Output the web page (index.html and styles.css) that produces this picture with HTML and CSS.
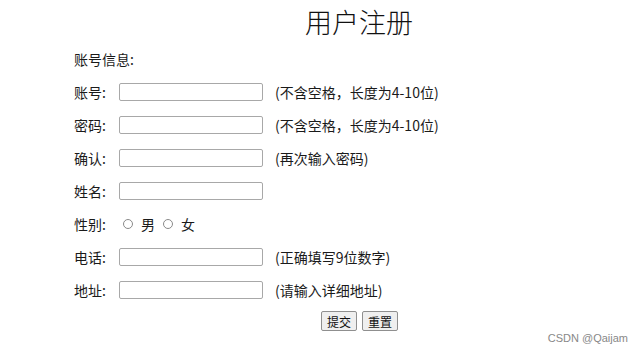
FILE: index.html
```html
<!DOCTYPE html>
<html lang="zh-CN">

<head>
    <meta charset="UTF-8">
    <meta name="viewport" content="width=device-width, initial-scale=1.0">
    <title>用户注册</title>
    <link rel="stylesheet" href="styles.css">
</head>

<body>

    <div class="page">
        <h1 class="title">用户注册</h1>
        <form class="reg">
            <div class="row info">账号信息:</div>
            <div class="row">
                <label class="lab">账号:</label>
                <input class="txt" type="text">
                <span class="tip">(不含空格，长度为4-10位)</span>
            </div>
            <div class="row">
                <label class="lab">密码:</label>
                <input class="txt" type="password">
                <span class="tip">(不含空格，长度为4-10位)</span>
            </div>
            <div class="row">
                <label class="lab">确认:</label>
                <input class="txt" type="password">
                <span class="tip">(再次输入密码)</span>
            </div>
            <div class="row">
                <label class="lab">姓名:</label>
                <input class="txt" type="text">
            </div>
            <div class="row">
                <label class="lab">性别:</label>
                <span class="sex">
                    <span class="radio"></span>男
                    <span class="radio"></span>女
                </span>
            </div>
            <div class="row">
                <label class="lab">电话:</label>
                <input class="txt" type="text">
                <span class="tip">(正确填写9位数字)</span>
            </div>
            <div class="row">
                <label class="lab">地址:</label>
                <input class="txt" type="text">
                <span class="tip">(请输入详细地址)</span>
            </div>
            <div class="row btns">
                <button class="btn" type="button">提交</button>
                <button class="btn" type="reset">重置</button>
            </div>
        </form>
    </div>

    <div class="mark">CSDN @Qaijam</div>

</body>

</html>
```
FILE: styles.css
```css
* {
    padding: 0;
    margin: 0;
    box-sizing: border-box;
}

html,
body {
    background: #fff;
    color: #1a1a1a;
    font-family: "Noto Sans CJK SC", "Liberation Sans", sans-serif;
    font-size: 14px;
}

.page {
    position: relative;
    width: 644px;
    height: 354px;
    padding-left: 74px;
}

.title {
    height: 43px;
    line-height: 43px;
    text-align: center;
    font-size: 27px;
    font-weight: 300;
    color: #111;
    padding-left: 0;
}

.row {
    display: flex;
    align-items: center;
    height: 33px;
}

.info {
    height: 32px;
}

.lab {
    width: 45px;
}

.txt {
    width: 144px;
    height: 18px;
    border: 1px solid #a8a8a8;
    border-radius: 2px;
    outline: none;
}

.tip {
    margin-left: 12px;
}

.sex {
    display: flex;
    align-items: center;
    margin-left: 4px;
}

.radio {
    display: inline-block;
    width: 10px;
    height: 10px;
    border: 1px solid #8a8a8a;
    border-radius: 50%;
    margin-right: 8px;
}

.radio:nth-of-type(2) {
    margin-left: 8px;
}

.btns {
    padding-left: 247px;
    height: 30px;
}

.btn {
    height: 20px;
    padding: 0 5px;
    margin-right: 5px;
    font-family: "Noto Sans CJK SC", sans-serif;
    font-size: 12px;
    color: #111;
    background: #efefef;
    border: 1px solid #8f8f8f;
    border-radius: 2px;
}

.mark {
    position: absolute;
    right: 16px;
    bottom: 10px;
    font-family: "Liberation Sans", sans-serif;
    font-size: 11px;
    color: #888;
}
```
